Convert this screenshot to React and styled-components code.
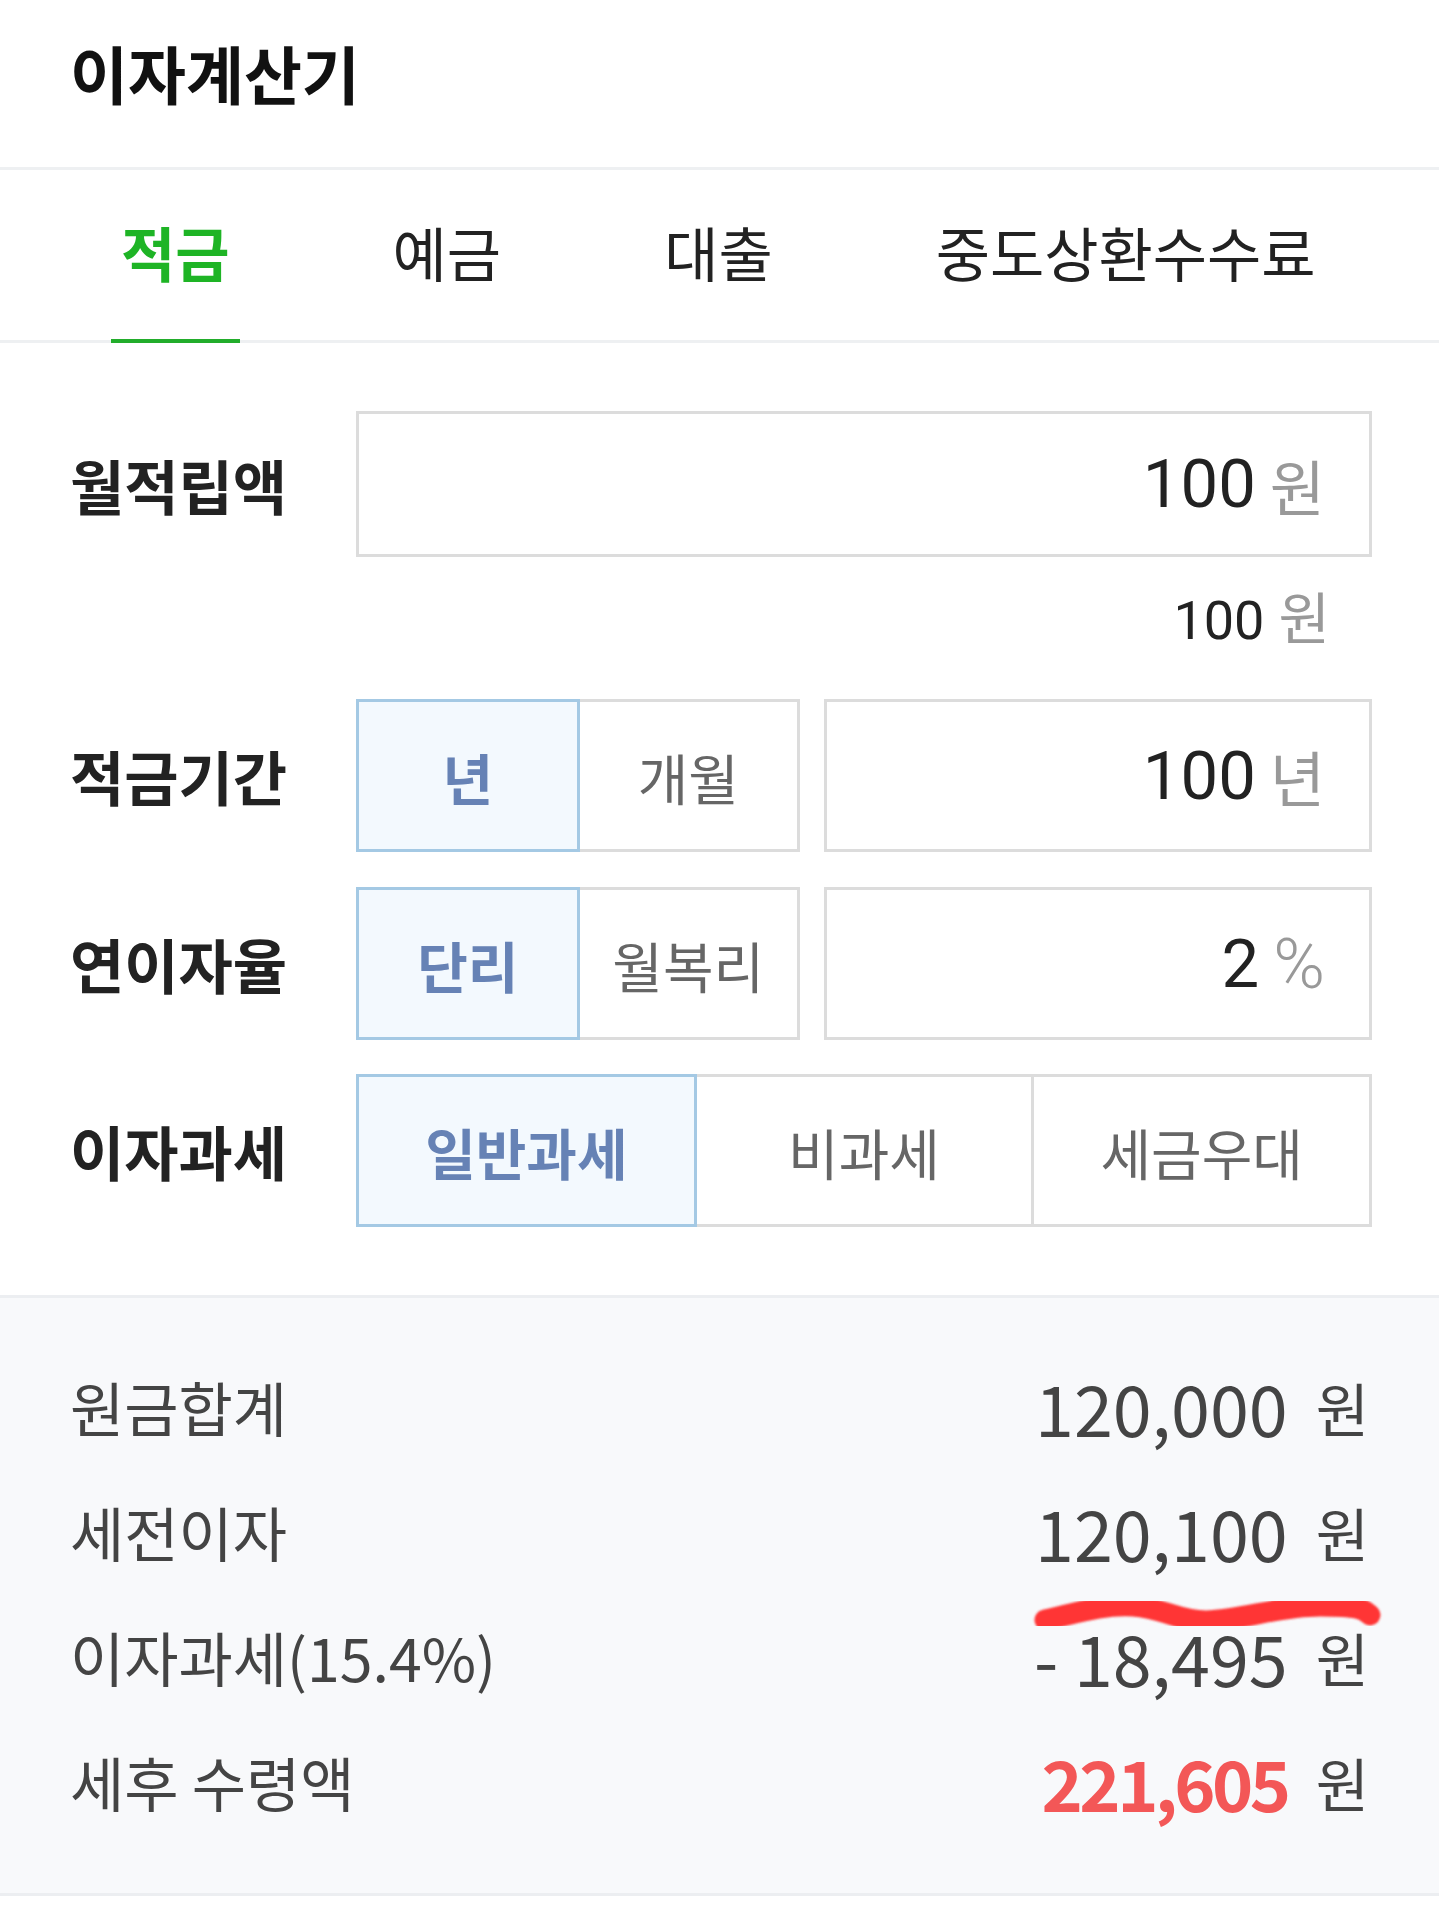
import React, { useState } from "react";
import styled, { createGlobalStyle } from "styled-components";

const GlobalStyle = createGlobalStyle`
  html, body {
    margin: 0;
    padding: 0;
    background: #ffffff;
  }
  body {
    font-family: "Noto Sans CJK KR", "Noto Sans", sans-serif;
    color: #222;
  }
  * { box-sizing: border-box; }
`;

const tabs = ["적금", "예금", "대출", "중도상환수수료"];

const results = [
  { label: "원금합계", value: "120,000" },
  { label: "세전이자", value: "120,100" },
  { label: "이자과세(15.4%)", value: "- 18,495" },
  { label: "세후 수령액", value: "221,605", highlight: true },
];

const App = () => {
  const [tab, setTab] = useState(0);
  const [period, setPeriod] = useState("년");
  const [rate, setRate] = useState("단리");
  const [tax, setTax] = useState("일반과세");

  return (
    <Page>
      <GlobalStyle />
      <Header>
        <Title>이자계산기</Title>
      </Header>

      <TabBar>
        {tabs.map((t, i) => (
          <Tab key={t} $active={i === tab} onClick={() => setTab(i)}>
            {t}
          </Tab>
        ))}
      </TabBar>

      <Form>
        <Row $h={146}>
          <Label>월적립액</Label>
          <InputBox>
            <Value>100</Value>
            <Unit>원</Unit>
          </InputBox>
        </Row>
        <Sub>
          <SubValue>100</SubValue>
          <SubUnit>원</SubUnit>
        </Sub>

        <Row>
          <Label>적금기간</Label>
          <ToggleGroup $w={444}>
            {["년", "개월"].map((o) => (
              <Toggle key={o} $on={period === o} onClick={() => setPeriod(o)}>
                {o}
              </Toggle>
            ))}
          </ToggleGroup>
          <InputBox $ml={24}>
            <Value>100</Value>
            <Unit>{period === "년" ? "년" : "개월"}</Unit>
          </InputBox>
        </Row>

        <Row $mt={35}>
          <Label>연이자율</Label>
          <ToggleGroup $w={444}>
            {["단리", "월복리"].map((o) => (
              <Toggle key={o} $on={rate === o} onClick={() => setRate(o)}>
                {o}
              </Toggle>
            ))}
          </ToggleGroup>
          <InputBox $ml={24}>
            <Value>2</Value>
            <Percent>%</Percent>
          </InputBox>
        </Row>

        <Row $mt={34}>
          <Label>이자과세</Label>
          <ToggleGroup>
            {["일반과세", "비과세", "세금우대"].map((o) => (
              <Toggle key={o} $on={tax === o} onClick={() => setTax(o)}>
                {o}
              </Toggle>
            ))}
          </ToggleGroup>
        </Row>
      </Form>

      <Results>
        {results.map((r) => (
          <ResultRow key={r.label}>
            <ResultLabel>{r.label}</ResultLabel>
            <ResultValue>
              <Amount $red={r.highlight}>{r.value}</Amount>
              <ResultUnit>원</ResultUnit>
            </ResultValue>
          </ResultRow>
        ))}
        <Scribble width="360" height="50" viewBox="0 0 360 50">
          <defs>
            <filter id="rough" x="-5%" y="-30%" width="110%" height="160%">
              <feGaussianBlur stdDeviation="0.9" />
            </filter>
          </defs>
          <path
            d="M 17 30 C 45 24, 75 14, 105 16 S 150 31, 178 31 C 215 30, 250 16, 292 16 S 336 20, 342 25"
            fill="none"
            stroke="#ff3535"
            strokeWidth="21"
            strokeLinecap="round"
            filter="url(#rough)"
          />
        </Scribble>
      </Results>
    </Page>
  );
};

export default App;

// Styled Components

const Page = styled.div`
  width: 1439px;
  min-height: 1932px;
  background: #ffffff;
`;

const Header = styled.header`
  height: 170px;
  padding: 0 0 24px 70px;
  display: flex;
  align-items: center;
  border-bottom: 3px solid #eef0f2;
`;

const Title = styled.h1`
  margin: 0;
  font-size: 63px;
  font-weight: 700;
  line-height: 1;
  color: #111;
`;

const TabBar = styled.nav`
  height: 173px;
  padding: 0 0 0 111px;
  display: flex;
  gap: 143px;
  border-bottom: 3px solid #eef0f2;
`;

const Tab = styled.button`
  display: flex;
  align-items: center;
  padding: 0 10px 6px;
  margin-bottom: -3px;
  background: transparent;
  border: none;
  border-bottom: 4px solid ${(p) => (p.$active ? "#22ad2b" : "transparent")};
  font-family: "Noto Sans CJK KR", sans-serif;
  font-size: 59px;
  font-weight: ${(p) => (p.$active ? 700 : 400)};
  color: ${(p) => (p.$active ? "#1eb425" : "#222")};
  cursor: pointer;
`;

const Form = styled.section`
  padding: 68px 67px 68px 70px;
`;

const Row = styled.div`
  display: flex;
  align-items: stretch;
  height: ${(p) => p.$h || 153}px;
  margin-top: ${(p) => p.$mt || 0}px;
`;

const Label = styled.div`
  width: 286px;
  flex-shrink: 0;
  display: flex;
  align-items: center;
  font-size: 59px;
  font-weight: 700;
  color: #222;
`;

const InputBox = styled.div`
  flex: 1;
  margin-left: ${(p) => p.$ml || 0}px;
  display: flex;
  align-items: center;
  justify-content: flex-end;
  padding-right: 44px;
  border: 3px solid #dcdcdc;
  background: #fff;
`;

const Value = styled.span`
  font-family: Roboto, sans-serif;
  font-size: 67px;
  color: #222;
`;

const Unit = styled.span`
  margin-left: 14px;
  font-size: 60px;
  color: #999;
`;

const Percent = styled.span`
  margin-left: 14px;
  font-family: Roboto, sans-serif;
  font-size: 70px;
  font-weight: 300;
  color: #999;
`;

const Sub = styled.div`
  height: 142px;
  padding: 22px 42px 0 0;
  display: flex;
  align-items: baseline;
  justify-content: flex-end;
`;

const SubValue = styled.span`
  font-family: Roboto, sans-serif;
  font-size: 54px;
  line-height: 1.3;
  color: #222;
`;

const SubUnit = styled.span`
  margin-left: 14px;
  font-size: 56px;
  line-height: 1.3;
  color: #999;
`;

const ToggleGroup = styled.div`
  display: flex;
  ${(p) => (p.$w ? `width: ${p.$w}px; flex-shrink: 0;` : "flex: 1;")}
`;

const Toggle = styled.button`
  flex: 1;
  position: relative;
  z-index: ${(p) => (p.$on ? 1 : 0)};
  display: flex;
  align-items: center;
  justify-content: center;
  padding: 0;
  border: 3px solid ${(p) => (p.$on ? "#a4c9e4" : "#dcdcdc")};
  background: ${(p) => (p.$on ? "#f3f9fe" : "#fff")};
  font-family: "Noto Sans CJK KR", sans-serif;
  font-size: 55px;
  font-weight: ${(p) => (p.$on ? 700 : 400)};
  color: ${(p) => (p.$on ? "#6682b5" : "#666")};
  cursor: pointer;

  & + & {
    margin-left: -3px;
  }
`;

const Results = styled.section`
  position: relative;
  padding: 46px 70px 49px 70px;
  background: #f8f9fb;
  border-top: 3px solid #eceef1;
  border-bottom: 3px solid #eceef1;
`;

const ResultRow = styled.div`
  height: 125px;
  display: flex;
  align-items: center;
  justify-content: space-between;
`;

const ResultLabel = styled.span`
  font-size: 59px;
  color: #444;
`;

const ResultValue = styled.span`
  display: flex;
  align-items: center;
`;

const Amount = styled.span`
  font-size: 70px;
  font-weight: ${(p) => (p.$red ? 700 : 400)};
  letter-spacing: ${(p) => (p.$red ? "-3.5px" : "0")};
  color: ${(p) => (p.$red ? "#f35757" : "#444")};
`;

const ResultUnit = styled.span`
  margin-left: 28px;
  font-size: 58px;
  color: #444;
`;

const Scribble = styled.svg`
  position: absolute;
  left: 1028px;
  top: 292px;
  pointer-events: none;
`;
